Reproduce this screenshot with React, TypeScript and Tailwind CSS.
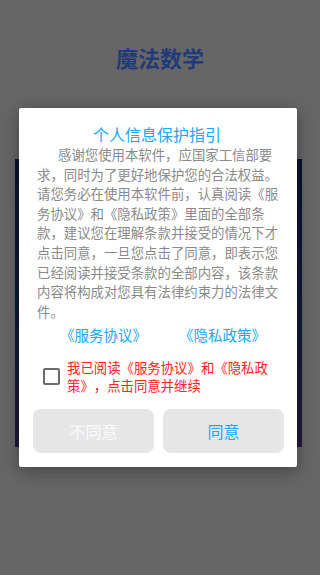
import { useState } from "react";

// Privacy consent dialog shown over the launch screen

const body = [
  "感谢您使用本软件，应国家工信部要",
  "求，同时为了更好地保护您的合法权益。",
  "请您务必在使用本软件前，认真阅读《服",
  "务协议》和《隐私政策》里面的全部条",
  "款，建议您在理解条款并接受的情况下才",
  "点击同意，一旦您点击了同意，即表示您",
  "已经阅读并接受条款的全部内容，该条款",
  "内容将构成对您具有法律约束力的法律文",
  "件。",
];

export default function App() {
  const [checked, setChecked] = useState(false);

  return (
    <div
      className="relative w-[320px] h-[575px] overflow-hidden bg-[#666666] flex flex-col [text-spacing-trim:space-all]"
      style={{ fontFamily: '"Noto Sans CJK SC", "Noto Sans", sans-serif' }}
    >
      {/* Launch screen behind the overlay */}
      <h1 className="pt-[42px] text-center text-[22px] leading-[30px] font-bold text-[#213b7a]">
        魔法数学
      </h1>
      <div className="mt-[87px] ml-[15px] w-[287px] h-[288px] bg-gradient-to-b from-[#0c1430] via-[#0e1a36] to-[#221a3c]" />

      {/* Dialog */}
      <div className="absolute inset-0 pt-[108px] pl-[19px]">
        <div className="w-[278px] h-[359px] bg-white rounded-[2px] shadow-[0_4px_18px_rgba(0,0,0,0.35)] flex flex-col pt-[15px]">
          <h2 className="text-center text-[16px] leading-[22px] text-[#22a6f2] pr-[2px]">
            个人信息保护指引
          </h2>

          <div className="pl-[18px] text-[13.4px] leading-[19.6px] text-[#8a8a8a] whitespace-nowrap">
            {body.map((line, i) => (
              <div key={i} className={i === 0 ? "pl-[21px]" : ""}>
                {line}
              </div>
            ))}
          </div>

          <div className="mt-[4px] flex pl-[41px] gap-[32px] text-[14.5px] leading-[20px] text-[#22a6f2]">
            <span>《服务协议》</span>
            <span>《隐私政策》</span>
          </div>

          <div className="mt-[13px] flex items-center pl-[24px] gap-[7px]">
            <button
              onClick={() => setChecked(!checked)}
              className="w-[17px] h-[17px] shrink-0 rounded-[2px] border-2 border-[#6b6b6b] bg-white flex items-center justify-center"
            >
              {checked && (
                <svg width="11" height="11" viewBox="0 0 24 24" fill="none" stroke="#6b6b6b" strokeWidth="4">
                  <path d="M4 12l5 5L20 6" />
                </svg>
              )}
            </button>
            <div className="text-[13.4px] leading-[18px] text-[#ff2424] whitespace-nowrap">
              <div>我已阅读《服务协议》和《隐私政</div>
              <div>策》，点击同意并继续</div>
            </div>
          </div>

          <div className="mt-[15px] flex pl-[14px] gap-[9px]">
            <button className="w-[121px] h-[44px] rounded-[8px] bg-[#e6e6e6] text-[16px] text-[#fafafa]">
              不同意
            </button>
            <button className="w-[121px] h-[44px] rounded-[8px] bg-[#e6e6e6] text-[16px] text-[#22a6f2]">
              同意
            </button>
          </div>
        </div>
      </div>
    </div>
  );
}
